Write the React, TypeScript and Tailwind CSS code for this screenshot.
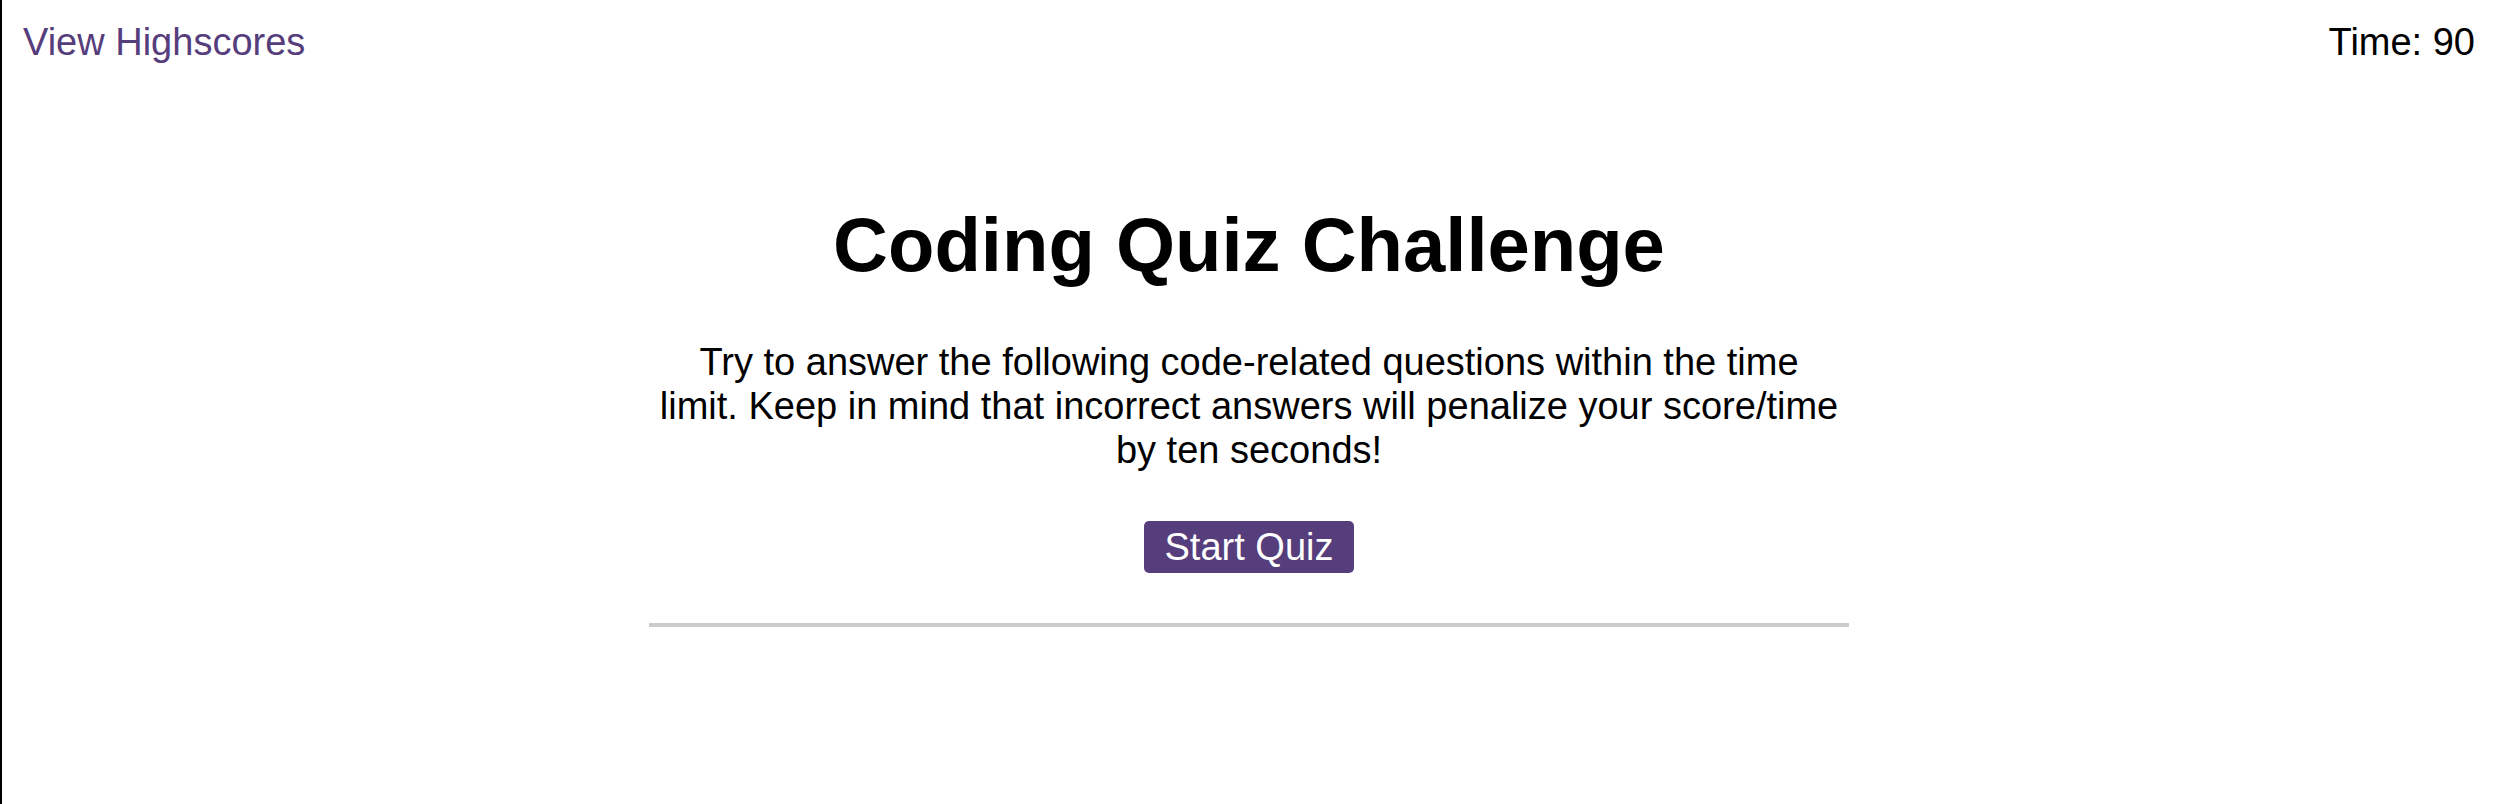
export default function App() {
  return (
    <div className="min-h-[804px] border-l-2 border-black bg-white text-black font-['Liberation_Sans',Arial,sans-serif]">
      <header className="flex justify-between px-[21px] pt-[20px] text-[38px] leading-[44px]">
        <a href="#" className="text-[#563d7c]">
          View Highscores
        </a>
        <span>Time: 90</span>
      </header>

      <main className="mx-auto mt-[137px] w-[1200px] text-center">
        <h1 className="text-[76px] font-bold leading-[88px]">Coding Quiz Challenge</h1>
        <p className="mt-[51px] text-[38px] leading-[44px]">
          Try to answer the following code-related questions within the time
          <br />
          limit. Keep in mind that incorrect answers will penalize your score/time
          <br />
          by ten seconds!
        </p>
        <button className="mt-[49px] rounded-[5px] bg-[#563d7c] px-[21px] py-[4px] text-[38px] leading-[44px] text-white">
          Start Quiz
        </button>
        <hr className="mt-[50px] h-[4px] border-0 bg-[#cccccc]" />
      </main>
    </div>
  );
}
